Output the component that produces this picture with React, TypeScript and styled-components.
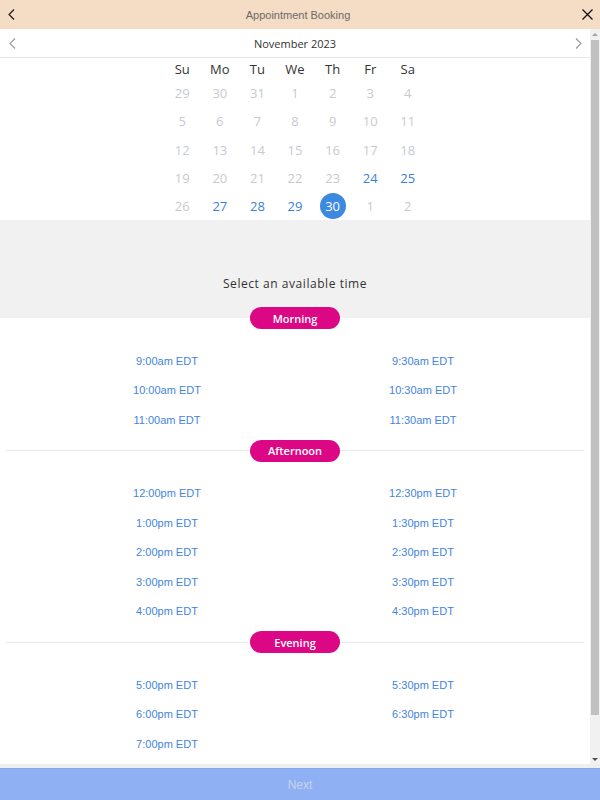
import React from 'react';
import styled, { createGlobalStyle } from 'styled-components';

const GlobalStyle = createGlobalStyle`
  html, body { margin: 0; padding: 0; height: 100%; }
  body { font-family: "Open Sans", "Liberation Sans", sans-serif; background: #fff; }
  #root { height: 100%; }
`;

const Screen = styled.div`
  height: 100vh;
  display: flex;
  flex-direction: column;
  overflow: hidden;
`;

const TopBar = styled.header`
  flex: none;
  height: 29px;
  background: #f5dcc5;
  display: grid;
  grid-template-columns: 22px 1fr 26px;
  align-items: center;
`;

const TopTitle = styled.h1`
  margin: 0;
  text-align: center;
  font-family: "Liberation Sans", Arial, sans-serif;
  font-weight: 400;
  font-size: 11px;
  color: #6a6a6a;
`;

const IconButton = styled.button`
  border: 0;
  background: none;
  padding: 0;
  display: flex;
  align-items: center;
  justify-content: center;
  height: 100%;
`;

const Body = styled.div`
  flex: 1;
  min-height: 0;
  display: flex;
`;

const Viewport = styled.main`
  flex: 1;
  min-width: 0;
  overflow-y: auto;
  scrollbar-width: none;
  &::-webkit-scrollbar { display: none; }
`;

const ScrollTrack = styled.div`
  flex: none;
  width: 10px;
  background: #f1f1f1;
  display: flex;
  flex-direction: column;
  align-items: center;
`;

const ScrollArrow = styled.div<{ $dir: 'up' | 'down' }>`
  flex: none;
  height: 10px;
  width: 100%;
  display: flex;
  align-items: center;
  justify-content: center;
  &::before {
    content: '';
    border-left: 3px solid transparent;
    border-right: 3px solid transparent;
    ${(p) => (p.$dir === 'up' ? 'border-bottom: 3px solid #a3a3a3;' : 'border-top: 3px solid #505050;')}
  }
`;

const ScrollThumb = styled.div`
  width: 8px;
  height: 675px;
  margin-top: 1px;
  background: #c1c1c1;
`;

const ScrollSpacer = styled.div`
  flex: 1;
`;

const Content = styled.div`
  padding-bottom: 14px;
`;

const MonthNav = styled.div`
  height: 28px;
  border-bottom: 1px solid #e5e8e8;
  display: grid;
  grid-template-columns: 24px 1fr 24px;
  align-items: center;
`;

const MonthLabel = styled.div`
  text-align: center;
  font-size: 11px;
  color: #333;
`;

const CalendarGrid = styled.div`
  display: grid;
  grid-template-columns: repeat(7, 37.6px);
  grid-template-rows: 21px;
  grid-auto-rows: 28.25px;
  justify-content: center;
  align-items: center;
  justify-items: center;
  font-size: 13px;
`;

const WeekDay = styled.div`
  color: #333;
`;

const Day = styled.div<{ $state: 'muted' | 'open' | 'selected' }>`
  width: 26px;
  height: 26px;
  border-radius: 50%;
  display: flex;
  align-items: center;
  justify-content: center;
  color: ${(p) => (p.$state === 'muted' ? '#c6cbcf' : p.$state === 'open' ? '#3a7fd6' : '#fff')};
  background: ${(p) => (p.$state === 'selected' ? '#3d89e1' : 'transparent')};
`;

const Prompt = styled.div`
  background: #f1f1f1;
  padding: 55px 0 25px;
  text-align: center;
  font-size: 12px;
  line-height: 18px;
  letter-spacing: 0.55px;
  color: #333;
`;

const PillRow = styled.div<{ $first?: boolean }>`
  height: 22px;
  margin: ${(p) => (p.$first ? '-11px 6px 0' : '0 6px')};
  display: flex;
  justify-content: center;
  background: ${(p) =>
    p.$first ? 'none' : 'linear-gradient(#e7ebeb, #e7ebeb) center / 100% 1px no-repeat'};
`;

const Pill = styled.span`
  width: 90px;
  height: 22px;
  border-radius: 11px;
  background: #dc0784;
  color: #fff;
  font-size: 11px;
  font-weight: 600;
  display: flex;
  align-items: center;
  justify-content: center;
`;

const TimeGrid = styled.div`
  max-width: 512px;
  margin: 0 auto;
  padding: 16.5px 0 5.5px;
  display: grid;
  grid-template-columns: 1fr 1fr;
  grid-auto-rows: 29.5px;
  align-items: center;
  justify-items: center;
`;

const TimeSlot = styled.button`
  border: 0;
  background: none;
  padding: 0;
  font-family: "Liberation Sans", Arial, sans-serif;
  font-size: 11px;
  color: #4385de;
`;

const BottomBand = styled.div`
  flex: none;
  height: 4px;
  background: #efefef;
`;

const NextButton = styled.button`
  flex: none;
  height: 32px;
  border: 0;
  border-top: 1px solid #82a6f0;
  background: #8fb0f2;
  color: #c8d3ea;
  font-family: "Liberation Sans", Arial, sans-serif;
  font-size: 12px;
`;

const Chevron = ({ dir, color }: { dir: 'left' | 'right'; color: string }) => (
  <svg width="7" height="11" viewBox="0 0 7 11">
    <path
      d={dir === 'left' ? 'M6 0.5 L1 5.5 L6 10.5' : 'M1 0.5 L6 5.5 L1 10.5'}
      fill="none"
      stroke={color}
      strokeWidth="1.1"
    />
  </svg>
);

const Close = () => (
  <svg width="11" height="11" viewBox="0 0 11 11">
    <path d="M0.5 0.5 L10.5 10.5 M10.5 0.5 L0.5 10.5" fill="none" stroke="#111" strokeWidth="1.3" />
  </svg>
);

type DayState = 'muted' | 'open' | 'selected';
const weekDays = ['Su', 'Mo', 'Tu', 'We', 'Th', 'Fr', 'Sa'];
const m = (n: number): [number, DayState] => [n, 'muted'];
const o = (n: number): [number, DayState] => [n, 'open'];
const days: [number, DayState][] = [
  m(29), m(30), m(31), m(1), m(2), m(3), m(4),
  m(5), m(6), m(7), m(8), m(9), m(10), m(11),
  m(12), m(13), m(14), m(15), m(16), m(17), m(18),
  m(19), m(20), m(21), m(22), m(23), o(24), o(25),
  m(26), o(27), o(28), o(29), [30, 'selected'], m(1), m(2),
];

const periods = [
  { name: 'Morning', times: ['9:00am', '9:30am', '10:00am', '10:30am', '11:00am', '11:30am'] },
  {
    name: 'Afternoon',
    times: ['12:00pm', '12:30pm', '1:00pm', '1:30pm', '2:00pm', '2:30pm', '3:00pm', '3:30pm', '4:00pm', '4:30pm'],
  },
  { name: 'Evening', times: ['5:00pm', '5:30pm', '6:00pm', '6:30pm', '7:00pm'] },
];

export default function App() {
  return (
    <Screen>
      <GlobalStyle />
      <TopBar>
        <IconButton aria-label="Back">
          <Chevron dir="left" color="#111" />
        </IconButton>
        <TopTitle>Appointment Booking</TopTitle>
        <IconButton aria-label="Close">
          <Close />
        </IconButton>
      </TopBar>
      <Body>
        <Viewport>
          <Content>
            <MonthNav>
              <IconButton aria-label="Previous month">
                <Chevron dir="left" color="#999" />
              </IconButton>
              <MonthLabel>November 2023</MonthLabel>
              <IconButton aria-label="Next month">
                <Chevron dir="right" color="#999" />
              </IconButton>
            </MonthNav>
            <CalendarGrid>
              {weekDays.map((d) => (
                <WeekDay key={d}>{d}</WeekDay>
              ))}
              {days.map(([n, s], i) => (
                <Day key={i} $state={s}>
                  {n}
                </Day>
              ))}
            </CalendarGrid>
            <Prompt>Select an available time</Prompt>
            {periods.map((p, i) => (
              <section key={p.name}>
                <PillRow $first={i === 0}>
                  <Pill>{p.name}</Pill>
                </PillRow>
                <TimeGrid>
                  {p.times.map((t) => (
                    <TimeSlot key={t}>{t} EDT</TimeSlot>
                  ))}
                </TimeGrid>
              </section>
            ))}
          </Content>
        </Viewport>
        <ScrollTrack aria-hidden>
          <ScrollArrow $dir="up" />
          <ScrollThumb />
          <ScrollSpacer />
          <ScrollArrow $dir="down" />
        </ScrollTrack>
      </Body>
      <BottomBand />
      <NextButton>Next</NextButton>
    </Screen>
  );
}
